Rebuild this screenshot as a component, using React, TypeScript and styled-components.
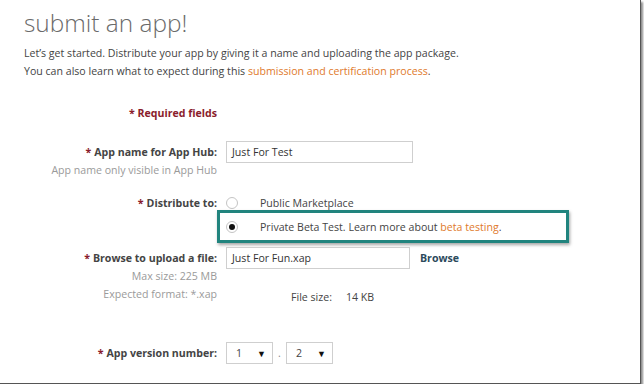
import styled, { createGlobalStyle } from "styled-components";

const GlobalStyle = createGlobalStyle`
    html, body {
        margin: 0;
        padding: 0;
        background: #ffffff;
    }
    body {
        font-family: "Open Sans", "Noto Sans", sans-serif;
        font-size: 10.6px;
        color: #444;
    }
`;

const Frame = styled.div`
    width: 641px;
    height: 384px;
    box-sizing: border-box;
    background: #fff;
    border-right: 1px solid #555;
    border-bottom: 1px solid #555;
    box-shadow: 2px 2px 2px rgba(0, 0, 0, 0.45);
    padding: 8px 0 0 24px;
    overflow: hidden;
`;

const Title = styled.h1`
    margin: 0;
    font-family: "Open Sans", "Noto Sans", sans-serif;
    font-weight: 300;
    font-size: 24.4px;
    line-height: 30px;
    color: #6a6a6a;
`;

const Intro = styled.p`
    margin: 6px 0 0;
    font-size: 10.6px;
    line-height: 18px;
    color: #444;
`;

const Link = styled.a`
    color: #e07a2c;
    text-decoration: none;
`;

const Form = styled.div`
    margin-top: 24px;
    margin-left: -24px;
    display: flex;
    flex-direction: column;
`;

const Row = styled.div<{ $top?: number; $height?: number; $start?: boolean }>`
    display: flex;
    align-items: ${(p) => (p.$start ? "flex-start" : "center")};
    margin-top: ${(p) => p.$top ?? 0}px;
    min-height: ${(p) => p.$height ?? 18}px;
`;

const Label = styled.div<{ $tone?: "required" | "hint" | "label" }>`
    width: 217px;
    flex: none;
    text-align: right;
    font-size: 10.6px;
    line-height: 14px;
    font-weight: ${(p) => (p.$tone === "hint" ? 400 : 700)};
    color: ${(p) =>
        p.$tone === "required" ? "#8a1c2c" : p.$tone === "hint" ? "#9a9a9a" : "#444"};
`;

const Star = styled.span`
    color: #8a1c2c;
    margin-right: 3px;
`;

const Field = styled.div`
    margin-left: 9px;
    display: flex;
    align-items: center;
`;

const TextBox = styled.div<{ $width: number }>`
    width: ${(p) => p.$width}px;
    height: 22px;
    box-sizing: border-box;
    border: 1px solid #cfcfcf;
    padding: 0 5px;
    display: flex;
    align-items: center;
    font-size: 10.6px;
    color: #333;
`;

const Radio = styled.span<{ $checked?: boolean }>`
    width: 12px;
    height: 12px;
    box-sizing: border-box;
    border-radius: 50%;
    border: 1px solid #c4c4c4;
    background: #fff;
    display: inline-flex;
    align-items: center;
    justify-content: center;
    margin: 0 22px 0 0;
    flex: none;
    &::after {
        content: "";
        display: ${(p) => (p.$checked ? "block" : "none")};
        width: 6px;
        height: 6px;
        border-radius: 50%;
        background: #111;
    }
`;

const Option = styled.div`
    display: flex;
    align-items: center;
    font-size: 10.6px;
    color: #444;
`;

const Highlight = styled.div`
    margin: 0 0 0 217px;
    width: 352px;
    height: 33px;
    box-sizing: border-box;
    border: 3px solid #21847e;
    box-shadow: 1px 2px 3px rgba(0, 0, 0, 0.35);
    display: flex;
    align-items: center;
    padding-left: 6px;
`;

const BrowseButton = styled.span`
    margin-left: 10px;
    font-weight: 700;
    font-size: 10.6px;
    color: #2c4a5c;
`;

const FileSize = styled.span`
    margin: 3px 0 0 74px;
    font-size: 10.6px;
    line-height: 14px;
    color: #444;
    & b {
        font-weight: 400;
        margin-left: 14px;
    }
`;

const Select = styled.div`
    width: 47px;
    height: 22px;
    box-sizing: border-box;
    border: 1px solid #cfcfcf;
    display: flex;
    align-items: center;
    justify-content: space-between;
    padding: 0 6px 0 9px;
    font-size: 10.6px;
    color: #444;
    & i {
        font-style: normal;
        font-size: 9px;
        color: #111;
    }
`;

const Dot = styled.span`
    width: 13px;
    text-align: center;
    color: #888;
`;

export default function App() {
    return (
        <>
            <GlobalStyle />
            <Frame>
                <Title>submit an app!</Title>
                <Intro>
                    Let’s get started. Distribute your app by giving it a name and uploading the app package.
                    <br />
                    You can also learn what to expect during this{" "}
                    <Link href="#">submission and certification process</Link>.
                </Intro>
                <Form>
                    <Row>
                        <Label $tone="required">* Required fields</Label>
                    </Row>
                    <Row $top={19} $height={22}>
                        <Label>
                            <Star>*</Star>App name for App Hub:
                        </Label>
                        <Field>
                            <TextBox $width={187}>Just For Test</TextBox>
                        </Field>
                    </Row>
                    <Row $height={14}>
                        <Label $tone="hint">App name only visible in App Hub</Label>
                    </Row>
                    <Row $top={19} $height={14}>
                        <Label>
                            <Star>*</Star>Distribute to:
                        </Label>
                        <Field>
                            <Option>
                                <Radio />
                                Public Marketplace
                            </Option>
                        </Field>
                    </Row>
                    <Highlight>
                        <Option>
                            <Radio $checked />
                            Private Beta Test. Learn more about&nbsp;<Link href="#">beta testing</Link>.
                        </Option>
                    </Highlight>
                    <Row $top={4} $height={21}>
                        <Label>
                            <Star>*</Star>Browse to upload a file:
                        </Label>
                        <Field>
                            <TextBox $width={184}>Just For Fun.xap</TextBox>
                            <BrowseButton>Browse</BrowseButton>
                        </Field>
                    </Row>
                    <Row $height={14}>
                        <Label $tone="hint">Max size: 225 MB</Label>
                    </Row>
                    <Row $top={4} $height={14} $start>
                        <Label $tone="hint">Expected format: *.xap</Label>
                        <FileSize>
                            File size:<b>14 KB</b>
                        </FileSize>
                    </Row>
                    <Row $top={38} $height={22}>
                        <Label>
                            <Star>*</Star>App version number:
                        </Label>
                        <Field>
                            <Select>
                                1<i>▼</i>
                            </Select>
                            <Dot>.</Dot>
                            <Select>
                                2<i>▼</i>
                            </Select>
                        </Field>
                    </Row>
                </Form>
            </Frame>
        </>
    );
}
